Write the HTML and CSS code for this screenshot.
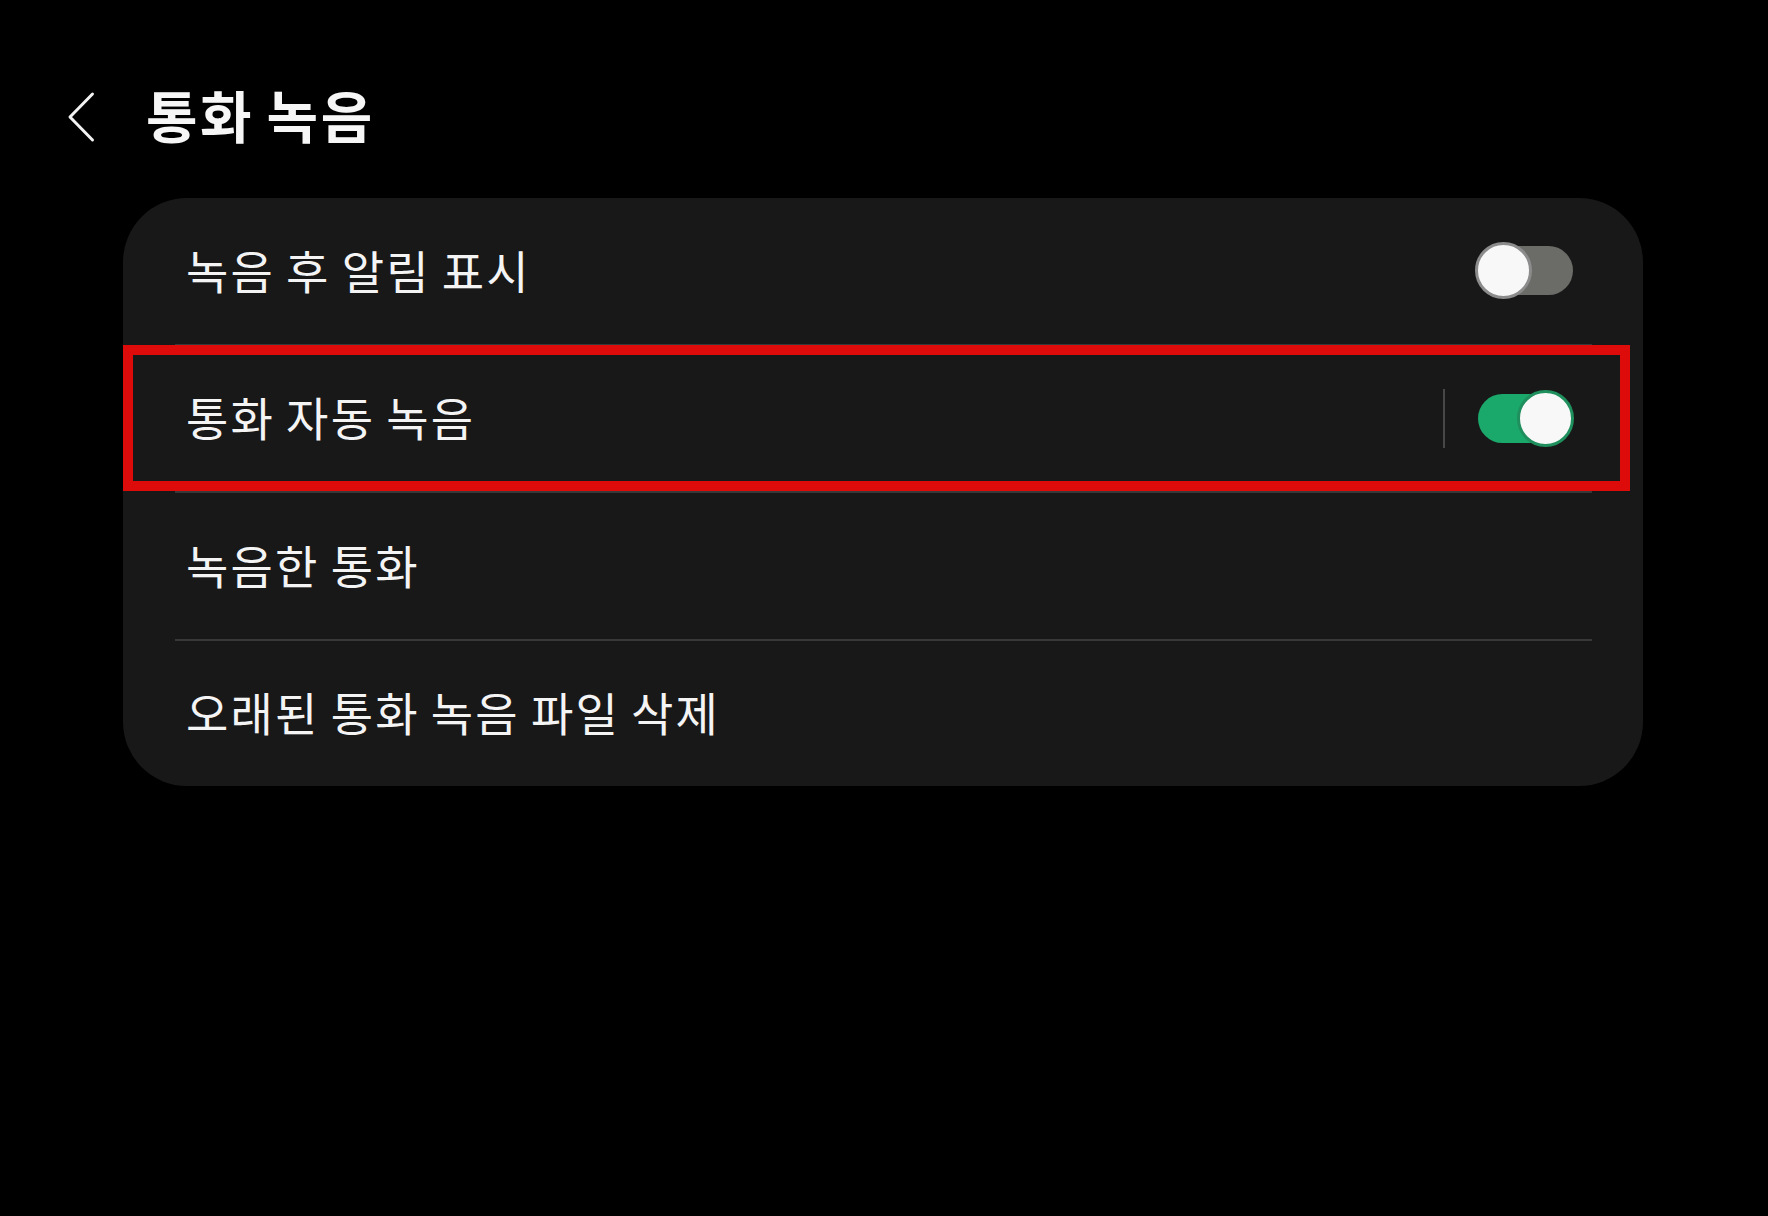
FILE: index.html
```html
<!DOCTYPE html>
<html lang="ko">
<head>
<meta charset="utf-8">
<title>통화 녹음</title>
<link rel="stylesheet" href="styles.css">
</head>
<body>
  <header class="header">
    <svg class="back" width="30" height="52" viewBox="0 0 30 52" aria-hidden="true">
      <path d="M26.5 3 L4 26 L26.5 49" fill="none" stroke="#f2f2f2" stroke-width="3" stroke-linecap="round" stroke-linejoin="round"/>
    </svg>
    <h1 class="title">통화 녹음</h1>
  </header>

  <section class="card">
    <div class="row">
      <span class="label">녹음 후 알림 표시</span>
      <span class="switch"><span class="knob"></span></span>
    </div>
    <div class="divider"></div>
    <div class="row">
      <span class="label">통화 자동 녹음</span>
      <span class="vline"></span>
      <span class="switch on"><span class="knob"></span></span>
    </div>
    <div class="divider"></div>
    <div class="row">
      <span class="label">녹음한 통화</span>
    </div>
    <div class="divider"></div>
    <div class="row">
      <span class="label">오래된 통화 녹음 파일 삭제</span>
    </div>
    <div class="highlight"></div>
  </section>
</body>
</html>
```

FILE: styles.css
```css
html, body {
  margin: 0;
  padding: 0;
  background: #000;
}

body {
  width: 1768px;
  height: 1216px;
  overflow: hidden;
  font-family: "Noto Sans CJK KR", "Noto Sans", sans-serif;
  color: #f4f4f4;
}

.header {
  display: flex;
  align-items: center;
  height: 74px;
  padding: 80px 0 0 66px;
}

.back {
  display: block;
  flex: none;
}

.title {
  margin: -6px 0 0 50px;
  font-size: 56px;
  font-weight: 700;
  line-height: 1;
  letter-spacing: 2.6px;
  word-spacing: -6px;
  color: #f6f6f6;
}

.card {
  position: relative;
  margin: 44px 125px 0 123px;
  background: #181818;
  border-radius: 64px;
}

.row {
  display: flex;
  align-items: center;
  height: 145.5px;
  padding: 0 70px 0 63px;
}

.label {
  flex: 1;
  margin-top: -4px;
  font-size: 46px;
  font-weight: 400;
  line-height: 1;
  letter-spacing: 2.2px;
  word-spacing: -4px;
  color: #f4f4f4;
}

.divider {
  height: 2px;
  margin: 0 51px 0 52px;
  background: #383838;
}

.vline {
  width: 2px;
  height: 59px;
  margin-right: 33px;
  background: #474747;
}

.switch {
  position: relative;
  width: 95px;
  height: 49px;
  border-radius: 25px;
  background: #6b6b68;
  flex: none;
}

.knob {
  position: absolute;
  top: -4px;
  left: -3px;
  width: 57px;
  height: 57px;
  box-sizing: border-box;
  border-radius: 50%;
  background: #f8f8f8;
  border: 3px solid #8c8c8c;
}

.switch.on {
  background: #1ba86b;
}

.switch.on .knob {
  left: auto;
  right: -1px;
  border-color: #1f8f5d;
}

.highlight {
  position: absolute;
  left: 0;
  top: 147px;
  width: 1507px;
  height: 146px;
  box-sizing: border-box;
  border: 10px solid #de0b0b;
  pointer-events: none;
}
```
